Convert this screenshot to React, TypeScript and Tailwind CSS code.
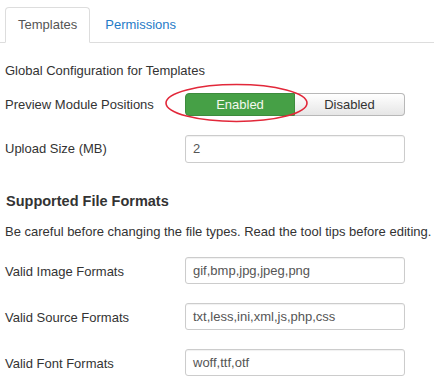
import React from 'react';

const fields = [
  { label: 'Valid Image Formats', value: 'gif,bmp,jpg,jpeg,png' },
  { label: 'Valid Source Formats', value: 'txt,less,ini,xml,js,php,css' },
  { label: 'Valid Font Formats', value: 'woff,ttf,otf' },
];

const TextInput: React.FC<{ value: string; tall?: boolean }> = ({ value, tall }) => (
  <div
    className={`flex w-[220px] items-center rounded-[3px] border border-[#cccccc] bg-white pl-[7px] text-[13px] text-[#555555] shadow-[inset_0_1px_1px_rgba(0,0,0,0.06)] ${
      tall ? 'h-[28px]' : 'h-[27px]'
    }`}
  >
    {value}
  </div>
);

export default function App() {
  return (
    <div
      className="h-[388px] w-[434px] overflow-hidden bg-white text-[13px] leading-[18px] text-[#333333]"
      style={{ fontFamily: '"Liberation Sans", Arial, sans-serif' }}
    >
      {/* Tabs */}
      <div className="flex items-end border-b border-[#dddddd] pl-[5px] pt-[7px]">
        <div className="-mb-px rounded-t-[4px] border border-b-white border-[#dddddd] bg-white px-[12px] py-[8px] text-[#555555]">
          Templates
        </div>
        <div className="ml-[2px] px-[13px] py-[8px] text-[#1f7bc7]">Permissions</div>
      </div>

      <div className="pl-[5px]">
        <p className="mt-[19px]">Global Configuration for Templates</p>

        {/* Preview toggle */}
        <div className="mt-[13px] flex items-center">
          <div className="w-[180px]">Preview Module Positions</div>
          <div className="relative flex h-[23px]">
            <div className="flex w-[110px] items-center justify-center rounded-l-[4px] border border-[#3d8b3d] bg-[#46a046] text-[#f4f8ee]">
              Enabled
            </div>
            <div className="flex w-[110px] items-center justify-center rounded-r-[4px] border border-l-0 border-[#b8b8b8] bg-gradient-to-b from-white to-[#e6e6e6] text-[#333333]">
              Disabled
            </div>
            <svg
              className="pointer-events-none absolute left-[-20px] top-[-9px] overflow-visible"
              width="143"
              height="38"
              viewBox="0 0 143 38"
            >
              <ellipse cx="71.5" cy="19" rx="70.5" ry="18.5" fill="none" stroke="#e2283a" strokeWidth="1.6" />
            </svg>
          </div>
        </div>

        <div className="mt-[19px] flex items-center">
          <div className="w-[180px]">Upload Size (MB)</div>
          <TextInput value="2" tall />
        </div>

        <h3 className="mt-[28px] pl-px text-[14.5px] font-bold leading-[20px] text-[#333333]">Supported File Formats</h3>
        <p className="mt-[12px]">Be careful before changing the file types. Read the tool tips before editing.</p>

        <div className="mt-[16px] flex flex-col gap-[19px]">
          {fields.map((f) => (
            <div key={f.label} className="flex items-center">
              <div className="w-[180px] pt-[2px]">{f.label}</div>
              <TextInput value={f.value} />
            </div>
          ))}
        </div>
      </div>
    </div>
  );
}
